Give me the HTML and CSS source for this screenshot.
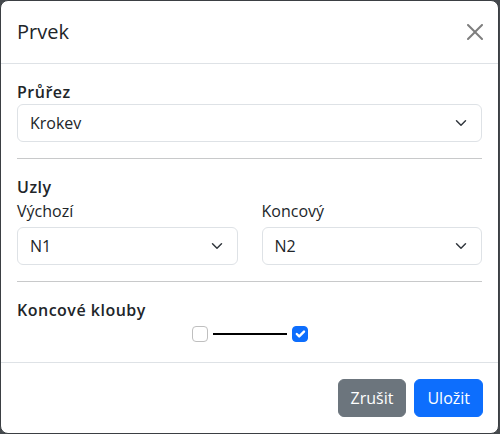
FILE: index.html
```html
<!DOCTYPE html>
<html lang="cs">
<head>
<meta charset="utf-8">
<title>Prvek</title>
<link rel="stylesheet" href="styles.css">
</head>
<body>
<div class="modal">
  <div class="modal-header">
    <h5 class="modal-title">Prvek</h5>
    <button class="btn-close" type="button" aria-label="Zavřít">
      <svg width="16" height="16" viewBox="0 0 16 16"><path d="M.293.293a1 1 0 0 1 1.414 0L8 6.586 14.293.293a1 1 0 1 1 1.414 1.414L9.414 8l6.293 6.293a1 1 0 0 1-1.414 1.414L8 9.414l-6.293 6.293a1 1 0 0 1-1.414-1.414L6.586 8 .293 1.707a1 1 0 0 1 0-1.414z"/></svg>
    </button>
  </div>
  <div class="modal-body">
    <div class="section-title">Průřez</div>
    <div class="select"><span>Krokev</span><svg class="chev" width="16" height="12" viewBox="0 0 16 16"><path d="m2 5 6 6 6-6"/></svg></div>
    <hr class="divider">
    <div class="section-title">Uzly</div>
    <div class="cols">
      <div class="col">
        <div class="field-label">Výchozí</div>
        <div class="select"><span>N1</span><svg class="chev" width="16" height="12" viewBox="0 0 16 16"><path d="m2 5 6 6 6-6"/></svg></div>
      </div>
      <div class="col">
        <div class="field-label">Koncový</div>
        <div class="select"><span>N2</span><svg class="chev" width="16" height="12" viewBox="0 0 16 16"><path d="m2 5 6 6 6-6"/></svg></div>
      </div>
    </div>
    <hr class="divider">
    <div class="section-title">Koncové klouby</div>
    <div class="joints">
      <span class="check"></span>
      <span class="beam"></span>
      <span class="check checked"><svg width="16" height="16" viewBox="0 0 20 20"><path d="m6 10 3 3 6-6"/></svg></span>
    </div>
  </div>
  <div class="modal-footer">
    <button class="btn btn-secondary" type="button">Zrušit</button>
    <button class="btn btn-primary" type="button">Uložit</button>
  </div>
</div>
</body>
</html>
```

FILE: styles.css
```css
* { box-sizing: border-box; }
html, body { margin: 0; padding: 0; }
body {
  background: #45494d;
  font-family: "Open Sans", "DejaVu Sans", sans-serif;
  font-size: 16px;
  line-height: 1.5;
  color: #212529;
  width: 500px;
  height: 434px;
}
.modal {
  width: 499px;
  height: 434px;
  background: #fff;
  border: 1px solid #3b3f43;
  border-radius: 8px;
  display: flex;
  flex-direction: column;
  overflow: hidden;
}
.modal-header {
  display: flex;
  align-items: center;
  justify-content: space-between;
  padding: 16px;
  border-bottom: 1px solid #dee2e6;
}
.modal-title {
  margin: 0;
  font-size: 20px;
  font-weight: 400;
  line-height: 1.5;
}
.btn-close {
  border: 0;
  background: transparent;
  padding: 0;
  margin-right: -1px;
  width: 16px;
  height: 16px;
  display: flex;
}
.btn-close svg { fill: #000; opacity: .5; }
.modal-body {
  padding: 16px;
  flex: 1;
}
.section-title {
  font-weight: 600;
  line-height: 24px;
  letter-spacing: 0.5px;
}
.field-label {
  line-height: 24px;
  margin-bottom: 4px;
}
.select {
  height: 38px;
  border: 1px solid #dee2e6;
  border-radius: 6px;
  padding: 0 12px;
  display: flex;
  align-items: center;
  justify-content: space-between;
}
.chev { fill: none; stroke: #343a40; stroke-width: 2; stroke-linecap: round; stroke-linejoin: round; }
.divider {
  margin: 16px 0;
  border: 0;
  border-top: 1px solid #c8c9ca;
}
.cols {
  display: grid;
  grid-template-columns: 1fr 1fr;
  column-gap: 24px;
}
.joints {
  display: flex;
  justify-content: center;
  align-items: center;
  height: 24px;
  gap: 5px;
}
.check {
  width: 16px;
  height: 16px;
  border: 1px solid #bfbfbf;
  border-radius: 4px;
  display: flex;
}
.check.checked {
  background: #0d6efd;
  border-color: #0d6efd;
}
.check svg { fill: none; stroke: #fff; stroke-width: 3; stroke-linecap: round; stroke-linejoin: round; margin: -1px; }
.beam {
  width: 74px;
  height: 2px;
  background: #000;
}
.modal-footer {
  border-top: 1px solid #dee2e6;
  padding: 12px 11px 12px 12px;
  display: flex;
  justify-content: flex-end;
}
.btn {
  font-family: inherit;
  font-size: 16px;
  line-height: 24px;
  padding: 6px 12px;
  margin: 4px;
  border: 1px solid transparent;
  border-radius: 6px;
  color: #fff;
}
.btn-secondary { background: #6c757d; border-color: #6c757d; }
.btn-primary { background: #0d6efd; border-color: #0d6efd; }
```
